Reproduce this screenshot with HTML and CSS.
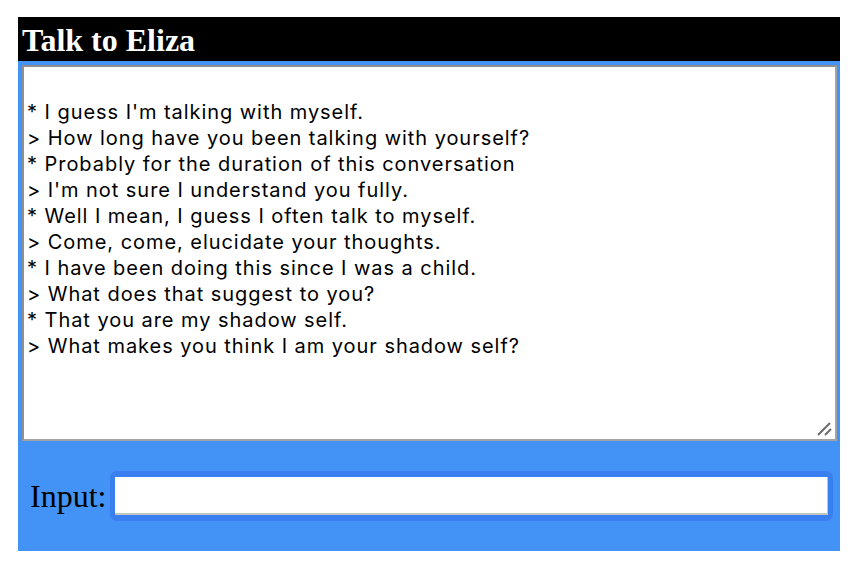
FILE: index.html
```html
<!DOCTYPE html>
<html>
<head>
<meta charset="utf-8">
<title>Talk to Eliza</title>
<link rel="stylesheet" href="styles.css">
</head>
<body>
<div class="app">
  <div class="header">Talk to Eliza</div>
  <div class="panel">
    <div class="log-wrap">
      <textarea class="log">

* I guess I'm talking with myself.
&gt; How long have you been talking with yourself?
* Probably for the duration of this conversation
&gt; I'm not sure I understand you fully.
* Well I mean, I guess I often talk to myself.
&gt; Come, come, elucidate your thoughts.
* I have been doing this since I was a child.
&gt; What does that suggest to you?
* That you are my shadow self.
&gt; What makes you think I am your shadow self?</textarea>
      <svg class="grip" width="16" height="16" viewBox="0 0 16 16" aria-hidden="true">
        <line x1="2" y1="14" x2="14" y2="2" stroke="#6b6b6b" stroke-width="2"/>
        <line x1="9" y1="14" x2="15" y2="8" stroke="#6b6b6b" stroke-width="2"/>
      </svg>
    </div>
    <div class="row">
      <label class="label" for="inp">Input:</label>
      <div class="field"><input id="inp" class="input" type="text"></div>
    </div>
  </div>
</div>
</body>
</html>
```

FILE: styles.css
```css
html, body {
  margin: 0;
  padding: 0;
  background: #ffffff;
}
.app {
  margin: 17px 0 0 18px;
  width: 822px;
}
.header {
  background: #000000;
  color: #ffffff;
  font-family: "Liberation Serif", "Times New Roman", serif;
  font-weight: bold;
  font-size: 32px;
  height: 44px;
  line-height: 46px;
  padding-left: 4px;
}
.panel {
  background: #4293f5;
  padding: 4px 3px 0 4px;
}
.log-wrap {
  position: relative;
  width: 815px;
  height: 376px;
}
.log {
  display: block;
  box-sizing: border-box;
  width: 815px;
  height: 376px;
  margin: 0;
  border: 2px solid;
  border-color: #8f8f8f #a3a3a3 #a3a3a3 #8f8f8f;
  padding: 6px 3px 2px 3px;
  font-family: Inter, "Liberation Sans", Arial, sans-serif;
  font-size: 20px;
  line-height: 26px;
  letter-spacing: 0.95px;
  color: #000;
  background: #fff;
  resize: none;
  outline: none;
}
.grip {
  position: absolute;
  right: 5px;
  bottom: 4px;
}
.row {
  display: flex;
  align-items: center;
  height: 110px;
  padding-left: 8px;
  gap: 4px;
}
.label {
  font-family: "Liberation Serif", "Times New Roman", serif;
  font-size: 32px;
  color: #000;
}
.field {
  background: #3a7ff0;
  border-radius: 7px;
  padding: 6px 5px;
  width: 713px;
}
.input {
  display: block;
  box-sizing: border-box;
  width: 713px;
  height: 38px;
  margin: 0;
  border: none;
  border-right: 1px solid #c4c4c4;
  border-bottom: 2px solid #c4c4c4;
  background: #fff;
  font-size: 20px;
  outline: none;
  padding: 0 4px;
}
```
